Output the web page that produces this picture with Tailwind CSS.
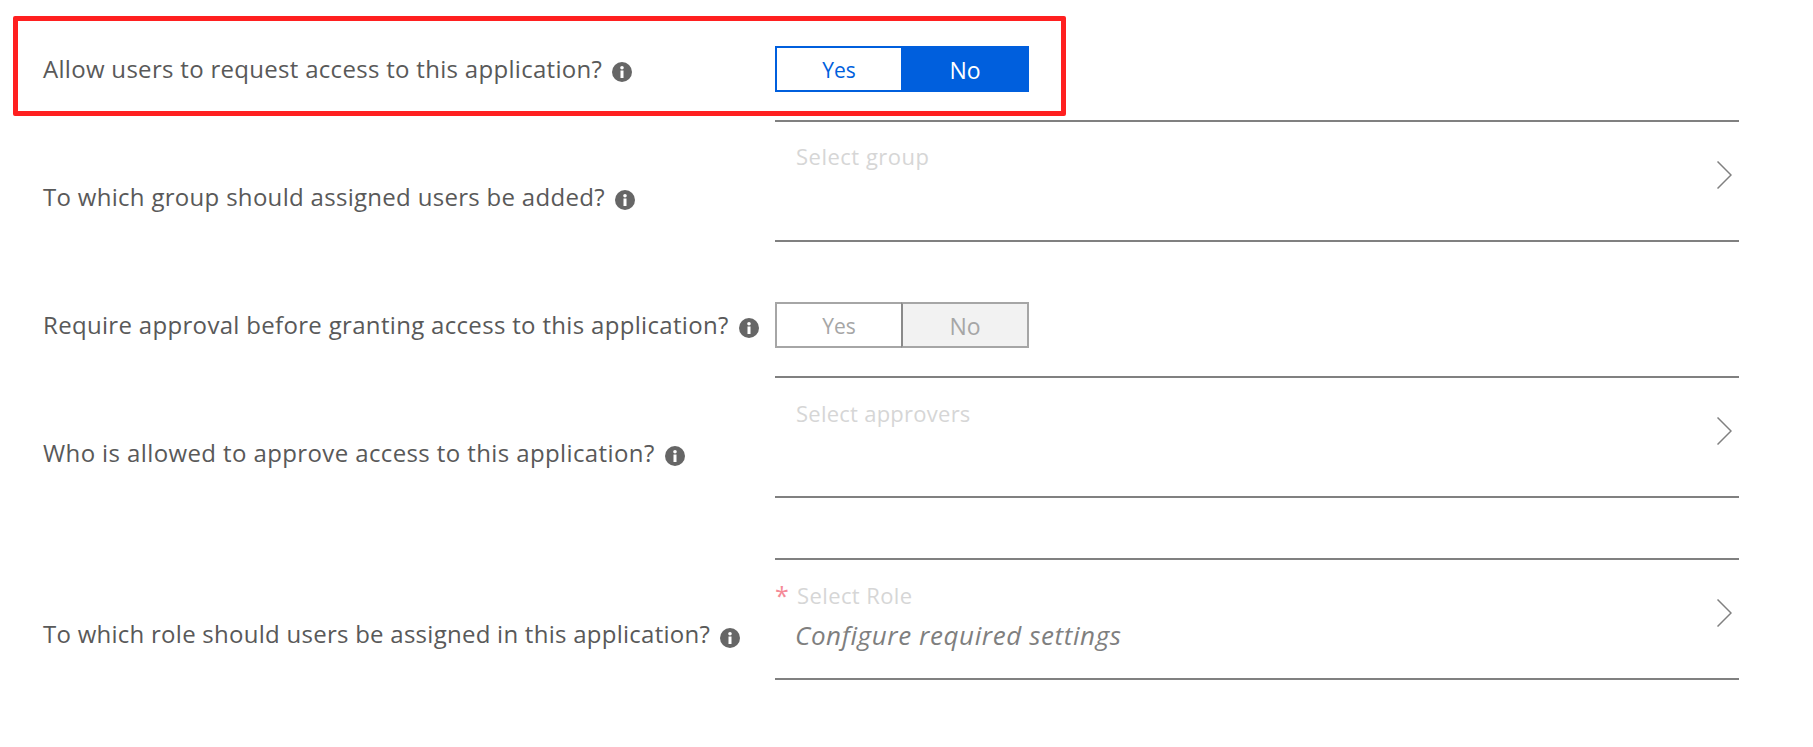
<!DOCTYPE html>
<html lang="en">
	<head>
		<meta charset="UTF-8" />
		<title>Self service</title>
		<script src="https://cdn.jsdelivr.net/npm/@tailwindcss/browser@4"></script>
	</head>
	<body class="bg-white font-['Open_Sans','Noto_Sans',sans-serif] text-[24px] tracking-[0.3px] text-[#595959]">
		<div class="relative h-[747px] w-[1813px] overflow-hidden pt-[46px]">
			<!-- highlight box -->
			<div class="absolute top-[16px] left-[13px] h-[100px] w-[1053px] rounded-[2px] border-[5px] border-[#ff2020]"></div>

			<!-- allow users -->
			<div class="flex h-[74px]">
				<div class="flex w-[775px] items-start pt-[7px] pl-[43px] leading-[32px]">
					<span>Allow users to request access to this application?</span>
					<svg class="mt-[9px] ml-[10px] size-[20px]" viewBox="0 0 20 20"><circle cx="10" cy="10" r="10" fill="#666666" /><rect x="8.5" y="8.5" width="3" height="7.5" fill="#fff" /><circle cx="10" cy="5.7" r="1.8" fill="#fff" /></svg>
				</div>
				<div class="flex h-[46px] w-[254px] text-[23px] tracking-normal text-[#005fdd]">
					<div class="flex w-[126px] items-center justify-center border-2 border-r-0 border-[#005fdd] bg-white pt-[4px] text-[21px]">Yes</div>
					<div class="flex w-[128px] items-center justify-center bg-[#005fdd] pt-[2px] text-white">No</div>
				</div>
			</div>

			<!-- group -->
			<div class="flex h-[122px]">
				<div class="flex w-[775px] items-start pt-[61px] pl-[43px] leading-[32px]">
					<span>To which group should assigned users be added?</span>
					<svg class="mt-[9px] ml-[10px] size-[20px]" viewBox="0 0 20 20"><circle cx="10" cy="10" r="10" fill="#666666" /><rect x="8.5" y="8.5" width="3" height="7.5" fill="#fff" /><circle cx="10" cy="5.7" r="1.8" fill="#fff" /></svg>
				</div>
				<div class="flex w-[964px] items-start justify-between border-y-2 border-[#808080] pr-[7px] pl-[21px]">
					<span class="mt-[18px] text-[22px] leading-[32px] tracking-[0.5px] text-[#d6d6d6]">Select group</span>
					<svg class="mt-[39px] h-[28px] w-[15px]" viewBox="0 0 15 28" fill="none" stroke="#808080" stroke-width="1.5"><path d="M0.5 0.5L14 14L0.5 27.5" /></svg>
				</div>
			</div>

			<!-- approval -->
			<div class="mt-[60px] flex h-[74px]">
				<div class="flex w-[775px] items-start pt-[7px] pl-[43px] leading-[32px]">
					<span class="tracking-[0.32px]">Require approval before granting access to this application?</span>
					<svg class="mt-[9px] ml-[10px] size-[20px]" viewBox="0 0 20 20"><circle cx="10" cy="10" r="10" fill="#666666" /><rect x="8.5" y="8.5" width="3" height="7.5" fill="#fff" /><circle cx="10" cy="5.7" r="1.8" fill="#fff" /></svg>
				</div>
				<div class="flex h-[46px] w-[254px] text-[23px] tracking-normal text-[#a6a6a6]">
					<div class="flex w-[126px] items-center justify-center border-2 border-r-0 border-[#a6a6a6] bg-white pt-[4px] text-[21px]">Yes</div>
					<div class="flex w-[128px] items-center justify-center border-2 border-[#a6a6a6] border-l-[#8a8a8a] bg-[#f2f2f2] pt-[2px]">No</div>
				</div>
			</div>

			<!-- approvers -->
			<div class="flex h-[122px]">
				<div class="flex w-[775px] items-start pt-[61px] pl-[43px] leading-[32px]">
					<span class="tracking-[0.39px]">Who is allowed to approve access to this application?</span>
					<svg class="mt-[9px] ml-[10px] size-[20px]" viewBox="0 0 20 20"><circle cx="10" cy="10" r="10" fill="#666666" /><rect x="8.5" y="8.5" width="3" height="7.5" fill="#fff" /><circle cx="10" cy="5.7" r="1.8" fill="#fff" /></svg>
				</div>
				<div class="flex w-[964px] items-start justify-between border-y-2 border-[#808080] pr-[7px] pl-[21px]">
					<span class="mt-[19px] text-[22px] leading-[32px] tracking-[0.25px] text-[#d6d6d6]">Select approvers</span>
					<svg class="mt-[39px] h-[28px] w-[15px]" viewBox="0 0 15 28" fill="none" stroke="#808080" stroke-width="1.5"><path d="M0.5 0.5L14 14L0.5 27.5" /></svg>
				</div>
			</div>

			<!-- role -->
			<div class="mt-[60px] flex h-[122px]">
				<div class="flex w-[775px] items-start pt-[60px] pl-[43px] leading-[32px]">
					<span class="tracking-[0.26px]">To which role should users be assigned in this application?</span>
					<svg class="mt-[10px] ml-[10px] size-[20px]" viewBox="0 0 20 20"><circle cx="10" cy="10" r="10" fill="#666666" /><rect x="8.5" y="8.5" width="3" height="7.5" fill="#fff" /><circle cx="10" cy="5.7" r="1.8" fill="#fff" /></svg>
				</div>
				<div class="flex w-[964px] items-start justify-between border-y-2 border-[#808080] pr-[7px]">
					<div class="pt-[19px] leading-[32px]">
						<div class="flex text-[22px]">
							<span class="w-[22px] text-[25px] text-[#f58a97]">*</span>
							<span class="tracking-[0.4px] text-[#d6d6d6]">Select Role</span>
						</div>
						<div class="mt-[8px] pl-[20px] text-[26px] tracking-[0.6px] text-[#7f7f7f] italic">Configure required settings</div>
					</div>
					<svg class="mt-[39px] h-[28px] w-[15px]" viewBox="0 0 15 28" fill="none" stroke="#808080" stroke-width="1.5"><path d="M0.5 0.5L14 14L0.5 27.5" /></svg>
				</div>
			</div>
		</div>
	</body>
</html>
